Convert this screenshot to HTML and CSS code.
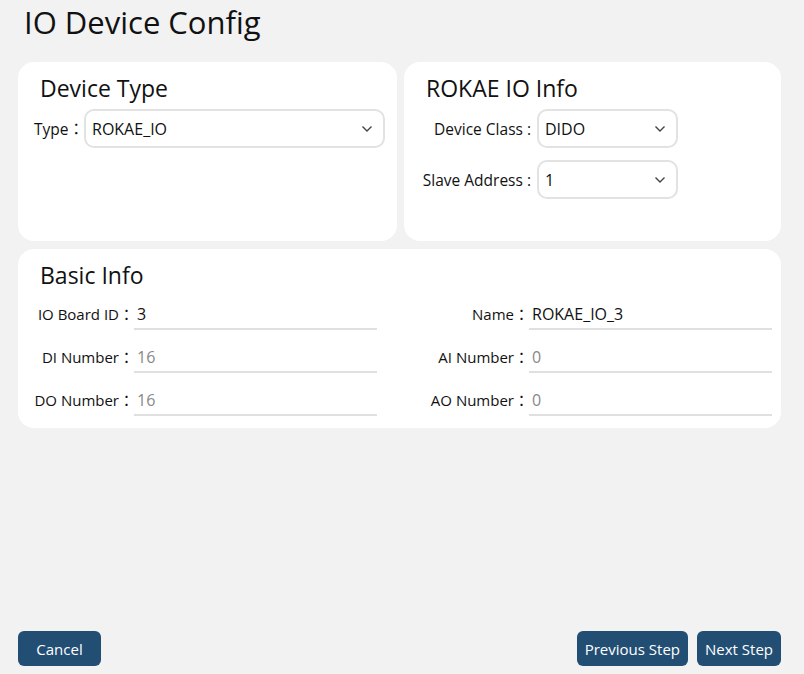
FILE: index.html
```html
<!DOCTYPE html>
<html lang="en">
<head>
    <meta charset="UTF-8">
    <meta name="viewport" content="width=device-width, initial-scale=1.0">
    <title>IO Device Config</title>
    <link rel="stylesheet" href="styles.css">
</head>
<body>
    <div class="page">
        <h1 class="page-title">IO Device Config</h1>

        <div class="top-row">
            <div class="card">
                <h2>Device Type</h2>
                <div class="field">
                    <label class="type-label">Type：</label>
                    <div class="select wide">
                        <span>ROKAE_IO</span>
                        <svg width="12" height="8" viewBox="0 0 12 8"><path d="M1.5 1.5 L6 6 L10.5 1.5" fill="none" stroke="#444" stroke-width="1.4"/></svg>
                    </div>
                </div>
            </div>
            <div class="card">
                <h2>ROKAE IO Info</h2>
                <div class="field">
                    <label class="info-label">Device Class :</label>
                    <div class="select small">
                        <span>DIDO</span>
                        <svg width="12" height="8" viewBox="0 0 12 8"><path d="M1.5 1.5 L6 6 L10.5 1.5" fill="none" stroke="#444" stroke-width="1.4"/></svg>
                    </div>
                </div>
                <div class="field">
                    <label class="info-label">Slave Address :</label>
                    <div class="select small">
                        <span>1</span>
                        <svg width="12" height="8" viewBox="0 0 12 8"><path d="M1.5 1.5 L6 6 L10.5 1.5" fill="none" stroke="#444" stroke-width="1.4"/></svg>
                    </div>
                </div>
            </div>
        </div>

        <div class="card basic">
            <h2>Basic Info</h2>
            <div class="basic-grid">
                <div class="row">
                    <label>IO Board ID：</label>
                    <div class="input">3</div>
                </div>
                <div class="row right">
                    <label>Name：</label>
                    <div class="input">ROKAE_IO_3</div>
                </div>
                <div class="row">
                    <label>DI Number：</label>
                    <div class="input muted">16</div>
                </div>
                <div class="row right">
                    <label>AI Number：</label>
                    <div class="input muted">0</div>
                </div>
                <div class="row">
                    <label>DO Number：</label>
                    <div class="input muted">16</div>
                </div>
                <div class="row right">
                    <label>AO Number：</label>
                    <div class="input muted">0</div>
                </div>
            </div>
        </div>

        <div class="footer">
            <button class="btn">Cancel</button>
            <div class="footer-right">
                <button class="btn">Previous Step</button>
                <button class="btn">Next Step</button>
            </div>
        </div>
    </div>
</body>
</html>
```
FILE: styles.css
```css
body {
    margin: 0;
    padding: 0;
    background: #f2f2f2;
    font-family: 'Open Sans', 'Noto Sans CJK JP', sans-serif;
    color: #111;
}

.page {
    height: 674px;
    box-sizing: border-box;
    padding: 0 23px 8px 18px;
    display: flex;
    flex-direction: column;
}

.page-title {
    font-size: 31px;
    font-weight: normal;
    margin: 0 0 14px 6px;
    height: 48px;
    line-height: 44px;
}

.top-row {
    display: grid;
    grid-template-columns: 379px 377px;
    gap: 7px;
}

.card {
    background: #fff;
    border-radius: 16px;
    height: 179px;
    box-sizing: border-box;
    padding: 10px 12px;
}

.card h2 {
    font-size: 23px;
    font-weight: normal;
    margin: 0 0 5px 10px;
    line-height: 32px;
}

.field {
    display: flex;
    align-items: center;
    margin-bottom: 12px;
    font-size: 15.5px;
}

label {
    white-space: nowrap;
    flex-shrink: 0;
}

.type-label {
    width: 54px;
    text-align: right;
}

.info-label {
    width: 115px;
    text-align: right;
    padding-right: 6px;
}

.select {
    height: 39px;
    box-sizing: border-box;
    border: 2px solid #e2e2e2;
    border-radius: 10px;
    display: flex;
    align-items: center;
    justify-content: space-between;
    padding: 0 10px 0 6px;
    font-size: 16px;
}

.select.wide {
    width: 302px;
}

.select.small {
    width: 141px;
}

.basic {
    margin-top: 8px;
}

.basic-grid {
    display: grid;
    grid-template-columns: 359px 394px;
    row-gap: 13px;
    margin-top: 9px;
}

.row {
    display: flex;
    align-items: flex-start;
    font-size: 16px;
    height: 30px;
}

.row label {
    width: 104px;
    text-align: right;
    line-height: 28px;
    font-size: 15px;
}

.row.right label {
    width: 140px;
}

.input {
    width: 243px;
    height: 30px;
    line-height: 28px;
    border-bottom: 2px solid #e0e0e0;
    box-sizing: border-box;
    padding-left: 3px;
}

.muted {
    color: #888;
}

.footer {
    margin-top: auto;
    display: flex;
    justify-content: space-between;
}

.footer-right {
    display: flex;
    gap: 9px;
}

.btn {
    background: #234e74;
    color: #fff;
    border: none;
    border-radius: 6px;
    height: 35px;
    padding: 0 8px;
    font-family: 'Open Sans', sans-serif;
    font-size: 15px;
    cursor: pointer;
}

.footer > .btn {
    width: 83px;
}
```
